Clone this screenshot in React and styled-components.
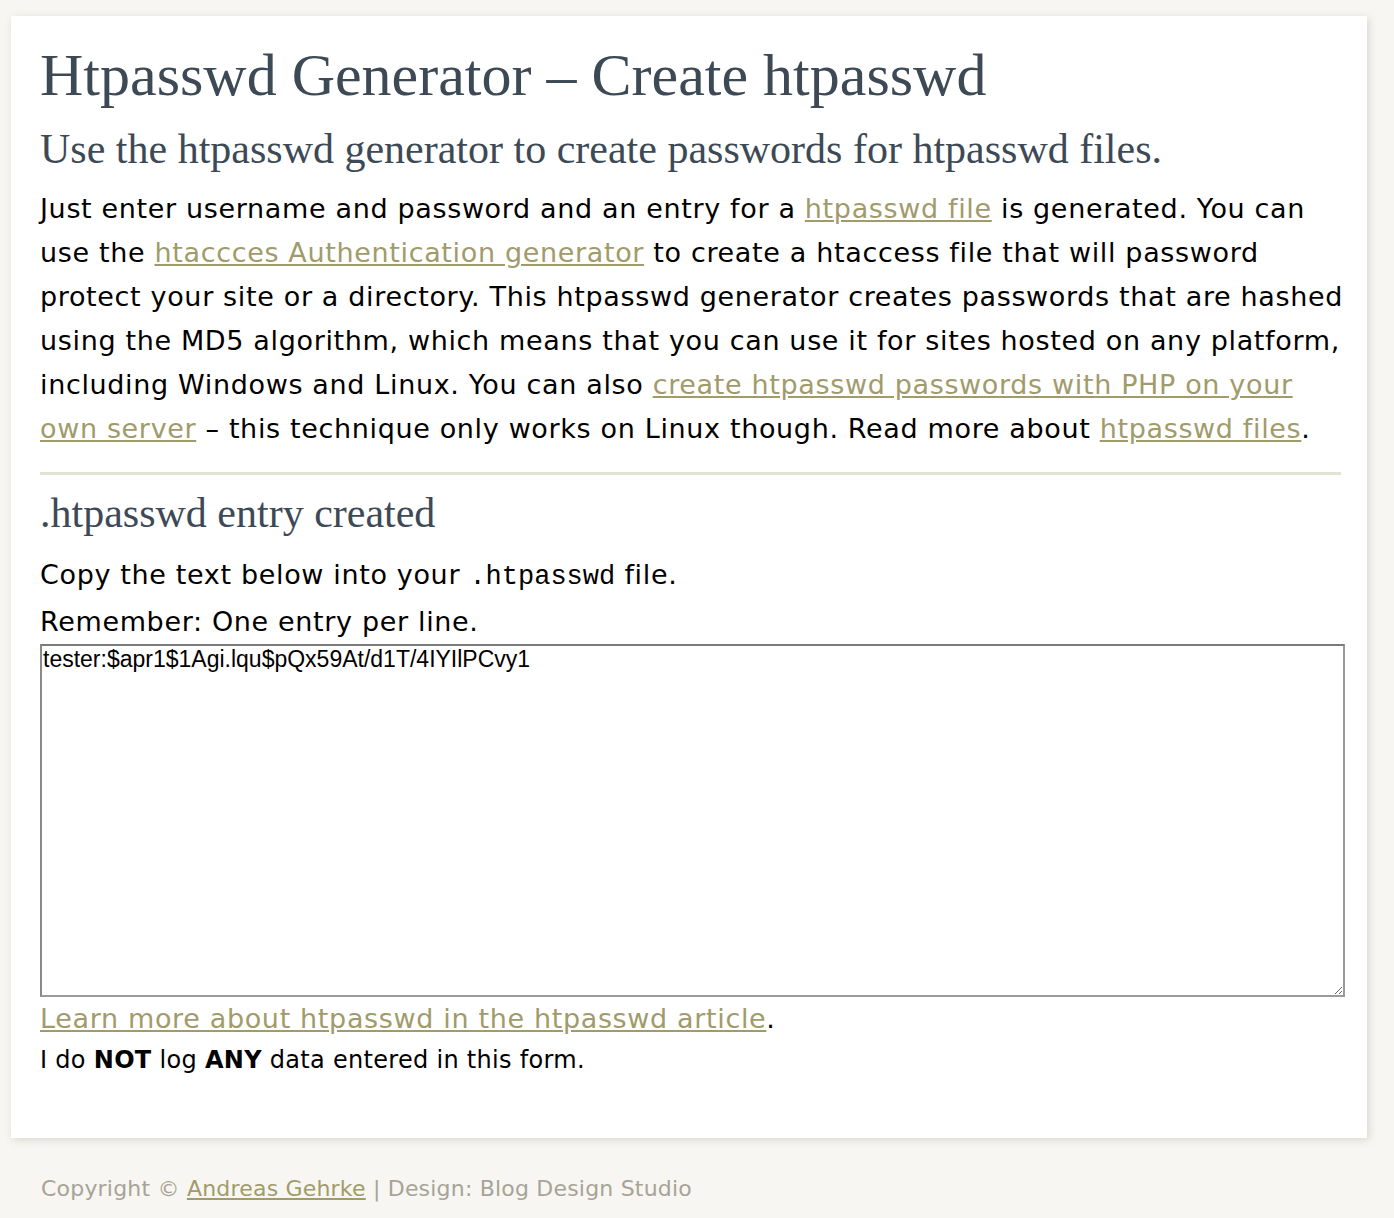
import React from 'react'
import styled, { createGlobalStyle } from 'styled-components'

const GlobalStyle = createGlobalStyle`
  body {
    margin: 0;
    background: #f7f6f2;
    font-family: "DejaVu Sans", Verdana, sans-serif;
  }
`

const Page = styled.div`
  padding: 16px 27px 0 11px;
`

const Card = styled.main`
  background: #fff;
  box-shadow: 2px 2px 8px rgba(90, 80, 60, 0.18);
  padding: 24px 22px 59px 29px;
`

const Title = styled.h1`
  margin: 0;
  font-family: "Liberation Serif", "DejaVu Serif", serif;
  font-weight: normal;
  font-size: 60px;
  line-height: 70px;
  color: #3d4a56;
`

const Subtitle = styled.h2`
  margin: 15px 0 13px;
  font-family: "Liberation Serif", "DejaVu Serif", serif;
  font-weight: normal;
  font-size: 42px;
  line-height: 49px;
  color: #3d4a56;
`

const Text = styled.p`
  margin: 0;
  font-size: ${p => p.$small ? '24px' : '27px'};
  line-height: ${p => p.$small ? '38px' : p.$tall ? '46px' : '44px'};
  letter-spacing: ${p => p.$small ? '0.3px' : '0.65px'};
  color: #000;
`

const Link = styled.a`
  color: #a19b6b;
  text-decoration: underline;
`

const Rule = styled.hr`
  border: none;
  height: 3px;
  background: #e3e3d3;
  margin: 21px 4px 14px 0;
`

const Section = styled.h3`
  margin: 0 0 14px;
  font-family: "Liberation Serif", "DejaVu Serif", serif;
  font-weight: normal;
  font-size: 42px;
  line-height: 49px;
  color: #3d4a56;
`

const Code = styled.code`
  font-family: "Liberation Mono", monospace;
  font-size: 27px;
  letter-spacing: 0;
`

const Output = styled.textarea`
  display: block;
  box-sizing: border-box;
  width: 100%;
  height: 353px;
  margin: 0;
  padding: 0 1px;
  border: 2px solid #9a9a9a;
  border-top-color: #7a7a7a;
  border-left-color: #8a8a8a;
  font-family: "Liberation Sans", Arial, sans-serif;
  font-size: 23px;
  color: #000;
  resize: both;
`

const Footer = styled.footer`
  padding: 38px 0 20px 30px;
  font-size: 22px;
  letter-spacing: 0.2px;
  color: #a8a397;
`

export default function App() {
  return (
    <Page>
      <GlobalStyle />
      <Card>
        <Title>Htpasswd Generator – Create htpasswd</Title>
        <Subtitle>Use the htpasswd generator to create passwords for htpasswd files.</Subtitle>
        <Text>
          Just enter username and password and an entry for a <Link href="#">htpasswd file</Link> is generated. You can
          use the <Link href="#">htaccces Authentication generator</Link> to create a htaccess file that will password
          protect your site or a directory. This htpasswd generator creates passwords that are hashed
          using the MD5 algorithm, which means that you can use it for sites hosted on any platform,
          including Windows and Linux. You can also <Link href="#">create htpasswd passwords with PHP on your
          own server</Link> – this technique only works on Linux though. Read more about <Link href="#">htpasswd files</Link>.
        </Text>
        <Rule />
        <Section>.htpasswd entry created</Section>
        <Text $tall>Copy the text below into your <Code>.htpasswd</Code> file.</Text>
        <Text>Remember: One entry per line.</Text>
        <Output readOnly defaultValue="tester:$apr1$1Agi.lqu$pQx59At/d1T/4IYIlPCvy1" />
        <Text><Link href="#">Learn more about htpasswd in the htpasswd article</Link>.</Text>
        <Text $small>I do <b>NOT</b> log <b>ANY</b> data entered in this form.</Text>
      </Card>
      <Footer>
        Copyright © <Link href="#">Andreas Gehrke</Link> | Design: Blog Design Studio
      </Footer>
    </Page>
  )
}
